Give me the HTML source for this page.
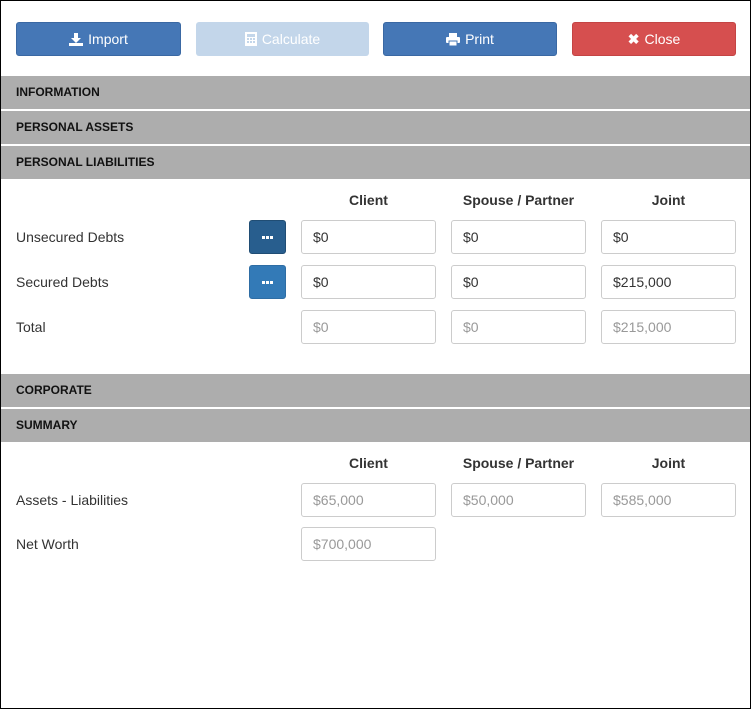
<!DOCTYPE html>
<html><head><style>
*{box-sizing:border-box;margin:0;padding:0}
body{width:751px;height:709px;background:#fff;font-family:"Liberation Sans",Arial,sans-serif;font-size:14px;color:#333;position:relative;overflow:hidden}
.frame{position:absolute;left:0;top:0;width:751px;height:709px;border:1px solid #000}
.btn{position:absolute;top:22px;height:34px;border-radius:3px;color:#fff;font-size:14px;display:flex;align-items:center;justify-content:center;gap:5px}
.sec{position:absolute;left:1px;width:749px;height:33px;background:#adadad;font-size:12px;font-weight:bold;color:#111;padding-left:15px;line-height:33px}
.inp{position:absolute;width:135px;height:34px;border:1px solid #ccc;border-radius:3px;padding-left:11px;line-height:32px;color:#333}
.ro{color:#999}
.lbl{position:absolute;left:16px}
.hd{position:absolute;width:135px;text-align:center;font-weight:bold}
.dot{position:absolute;left:249px;width:37px;height:34px;border-radius:3px;display:flex;align-items:center;justify-content:center;gap:1px}
.dot i{display:block;width:3px;height:3px;background:#fff}
</style></head><body>
<div class="frame"></div>
<div class="btn" style="left:16px;width:165px;background:#4577b6;border:1px solid #3a68a3"><svg width="14" height="13" viewBox="0 0 14 13"><path d="M5 0h4v5h3L7 10 2 5h3z" fill="#fff"/><rect x="0" y="10" width="14" height="3" fill="#fff"/></svg>Import</div>
<div class="btn" style="left:196px;width:173px;background:#c3d6ea"><svg width="12" height="14" viewBox="0 0 12 14"><rect x="0" y="0" width="12" height="14" fill="#fff"/><rect x="2" y="2" width="8" height="3" fill="#c3d6ea"/><g fill="#c3d6ea"><rect x="2" y="6" width="2" height="2"/><rect x="5" y="6" width="2" height="2"/><rect x="8" y="6" width="2" height="2"/><rect x="2" y="9" width="2" height="2"/><rect x="5" y="9" width="2" height="2"/><rect x="8" y="9" width="2" height="2"/></g></svg>Calculate</div>
<div class="btn" style="left:383px;width:174px;background:#4577b6;border:1px solid #3a68a3"><svg width="14" height="13" viewBox="0 0 14 13"><rect x="3" y="0" width="8" height="4" fill="#fff"/><rect x="0" y="4" width="14" height="6" rx="1" fill="#fff"/><rect x="3" y="8" width="8" height="5" fill="#fff" stroke="#4577b6"/></svg>Print</div>
<div class="btn" style="left:572px;width:164px;background:#d64f4f;border:1px solid #c44444"><span style="font-weight:bold">✖</span>Close</div>
<div class="sec" style="top:76px">INFORMATION</div>
<div class="sec" style="top:111px">PERSONAL ASSETS</div>
<div class="sec" style="top:146px">PERSONAL LIABILITIES</div>
<div class="hd" style="left:301px;top:192px">Client</div>
<div class="hd" style="left:451px;top:192px">Spouse / Partner</div>
<div class="hd" style="left:601px;top:192px">Joint</div>
<div class="lbl" style="top:229px">Unsecured Debts</div>
<div class="dot" style="top:220px;background:#285e8e;border:1px solid #204d74"><i></i><i></i><i></i></div>
<div class="inp" style="left:301px;top:220px">$0</div><div class="inp" style="left:451px;top:220px">$0</div><div class="inp" style="left:601px;top:220px">$0</div>
<div class="lbl" style="top:274px">Secured Debts</div>
<div class="dot" style="top:265px;background:#337ab7;border:1px solid #2e6da4"><i></i><i></i><i></i></div>
<div class="inp" style="left:301px;top:265px">$0</div><div class="inp" style="left:451px;top:265px">$0</div><div class="inp" style="left:601px;top:265px">$215,000</div>
<div class="lbl" style="top:319px">Total</div>
<div class="inp ro" style="left:301px;top:310px">$0</div><div class="inp ro" style="left:451px;top:310px">$0</div><div class="inp ro" style="left:601px;top:310px">$215,000</div>
<div class="sec" style="top:374px">CORPORATE</div>
<div class="sec" style="top:409px">SUMMARY</div>
<div class="hd" style="left:301px;top:455px">Client</div>
<div class="hd" style="left:451px;top:455px">Spouse / Partner</div>
<div class="hd" style="left:601px;top:455px">Joint</div>
<div class="lbl" style="top:492px">Assets - Liabilities</div>
<div class="inp ro" style="left:301px;top:483px">$65,000</div><div class="inp ro" style="left:451px;top:483px">$50,000</div><div class="inp ro" style="left:601px;top:483px">$585,000</div>
<div class="lbl" style="top:536px">Net Worth</div>
<div class="inp ro" style="left:301px;top:527px">$700,000</div>
</body></html>
